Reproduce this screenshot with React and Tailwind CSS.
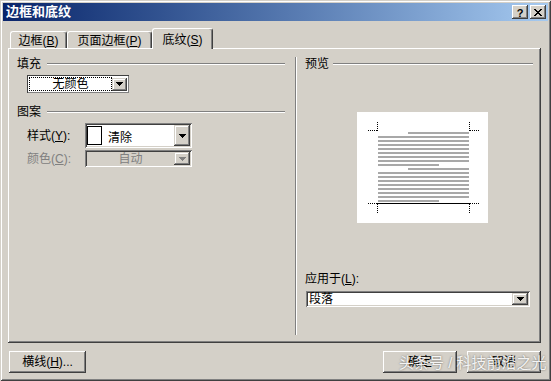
import React from 'react';

function Arrow({ color = '#000' }) {
  return (
    <svg width="7" height="4" viewBox="0 0 7 4" shapeRendering="crispEdges">
      <rect x="0" y="0" width="7" height="1" fill={color} />
      <rect x="1" y="1" width="5" height="1" fill={color} />
      <rect x="2" y="2" width="3" height="1" fill={color} />
      <rect x="3" y="3" width="1" height="1" fill={color} />
    </svg>
  );
}

function DropBtn({ className, disabled }) {
  return (
    <div
      className={
        'flex items-center justify-center bg-[#d4d0c8] shadow-[inset_-1px_-1px_#404040,inset_1px_1px_#d4d0c8,inset_-2px_-2px_#808080,inset_2px_2px_#ffffff] ' +
        className
      }
    >
      <Arrow color={disabled ? '#808080' : '#000'} />
    </div>
  );
}

function GroupHead({ label, gapClass }) {
  return (
    <div className="flex items-center h-[14px]">
      <span className="whitespace-nowrap">{label}</span>
      <div className={'flex-1 h-[2px] border-t border-b border-t-[#808080] border-b-white ' + gapClass} />
    </div>
  );
}

function Preview() {
  const rows = [];
  for (let i = 0; i < 18; i++) {
    const y = 20 + 4 * i;
    const x1 = i === 0 || i === 9 ? 51 : 21;
    const x2 = i === 8 || i === 17 ? 82 : 112;
    rows.push(<rect key={i} x={x1} y={y} width={x2 - x1} height="2" fill="#a8a8a8" />);
  }
  return (
    <svg width="131" height="111" viewBox="0 0 131 111" shapeRendering="crispEdges">
      {rows}
      <g stroke="#000" strokeWidth="1" strokeDasharray="1 1" fill="none">
        <line x1="20.5" y1="10" x2="20.5" y2="19" />
        <line x1="11" y1="18.5" x2="20" y2="18.5" />
        <line x1="112.5" y1="10" x2="112.5" y2="19" />
        <line x1="113" y1="18.5" x2="122" y2="18.5" />
        <line x1="11" y1="91.5" x2="20" y2="91.5" />
        <line x1="20.5" y1="92" x2="20.5" y2="102" />
        <line x1="113" y1="91.5" x2="122" y2="91.5" />
        <line x1="112.5" y1="92" x2="112.5" y2="102" />
      </g>
      <line x1="20" y1="91.5" x2="113" y2="91.5" stroke="#000" strokeWidth="1" />
    </svg>
  );
}

export default function App() {
  return (
    <div className="relative w-[551px] h-[381px] overflow-hidden bg-[#d4d0c8] shadow-[inset_1px_1px_#d4d0c8,inset_-1px_-1px_#404040,inset_2px_2px_#ffffff,inset_-2px_-2px_#808080] text-[12px] leading-[14px] text-black font-['Liberation_Sans','Noto_Sans_CJK_SC',sans-serif] pt-[3px] px-[3px] flex flex-col">
      {/* Title bar */}
      <div className="h-[18px] bg-linear-to-r from-[#0a246a] to-[#a6caf0] flex items-center justify-between pl-[3px] pr-[2px]">
        <span className="text-white font-bold text-[13px] leading-[16px]">边框和底纹</span>
        <div className="flex gap-[2px]">
          <div className="w-[16px] h-[14px] flex items-center justify-center bg-[#d4d0c8] shadow-[inset_-1px_-1px_#404040,inset_1px_1px_#ffffff,inset_-2px_-2px_#808080] font-bold text-[11px] leading-[12px] pt-[1px]">
            ?
          </div>
          <div className="w-[16px] h-[14px] flex items-center justify-center bg-[#d4d0c8] shadow-[inset_-1px_-1px_#404040,inset_1px_1px_#ffffff,inset_-2px_-2px_#808080]">
            <svg width="8" height="7" viewBox="0 0 8 7" shapeRendering="crispEdges">
              <path d="M0 0h2v1h-2zM6 0h2v1h-2zM1 1h2v1h-2zM5 1h2v1h-2zM2 2h4v1h-4zM3 3h2v1h-2zM2 4h4v1h-4zM1 5h2v1h-2zM5 5h2v1h-2zM0 6h2v1h-2zM6 6h2v1h-2z" fill="#000" />
            </svg>
          </div>
        </div>
      </div>

      {/* Tabs */}
      <div className="mt-[7px] h-[20px] flex items-end pl-[7px]">
        <div className="w-[57px] h-[17px] flex items-center justify-center border-t border-l border-r border-t-white border-l-white border-r-[#404040] shadow-[inset_-1px_0_#808080] rounded-t-[3px] pt-[1px]">
          <span>
            边框(<span className="underline">B</span>)
          </span>
        </div>
        <div className="w-[85px] h-[17px] flex items-center justify-center border-t border-l border-r border-t-white border-l-white border-r-[#404040] shadow-[inset_-1px_0_#808080] rounded-t-[3px] pt-[1px]">
          <span>
            页面边框(<span className="underline">P</span>)
          </span>
        </div>
        <div className="relative z-10 -mb-[1px] w-[61px] h-[21px] bg-[#d4d0c8] flex items-center justify-center border-t border-l border-r border-t-white border-l-white border-r-[#404040] shadow-[inset_-1px_0_#808080] rounded-t-[3px] pt-[1px]">
          <span>
            底纹(<span className="underline">S</span>)
          </span>
        </div>
      </div>

      {/* Panel */}
      <div className="ml-[5px] mr-[7px] h-[295px] flex pt-[9px] pb-[8px] shadow-[inset_-1px_-1px_#404040,inset_1px_1px_#ffffff,inset_-2px_-2px_#808080]">
        {/* Left column */}
        <div className="w-[287px] pl-[9px] pr-[10px] flex flex-col">
          <GroupHead label="填充" gapClass="ml-[6px]" />
          <div className="mt-[4px] ml-[10px] w-[102px] h-[18px] bg-white flex shadow-[inset_1px_1px_#404040,inset_-1px_-1px_#808080] p-[2px]">
            <div className="flex-1 flex items-center justify-center border border-dotted border-black">
              无颜色
            </div>
            <div className="flex items-center">
              <DropBtn className="w-[15px] h-[13px]" />
            </div>
          </div>

          <div className="mt-[12px]">
            <GroupHead label="图案" gapClass="ml-[6px]" />
          </div>

          <div className="mt-[4px] ml-[10px] flex items-center h-[25px]">
            <span className="w-[58px]">
              样式(<span className="underline">Y</span>):
            </span>
            <div className="w-[107px] h-[25px] bg-white flex items-stretch p-[2px] shadow-[inset_1px_1px_#808080,inset_-1px_-1px_#ffffff,inset_2px_2px_#404040,inset_-2px_-2px_#d4d0c8]">
              <div className="flex-1 flex items-center">
                <div className="w-[15px] h-[19px] border border-black bg-white ml-[0px]" />
                <span className="ml-[6px] mt-[4px]">清除</span>
              </div>
              <DropBtn className="w-[16px]" />
            </div>
          </div>

          <div className="mt-[2px] ml-[10px] flex items-center h-[17px] text-[#808080]">
            <span className="w-[58px]">
              颜色(<span className="underline">C</span>):
            </span>
            <div className="w-[107px] h-[17px] bg-[#d4d0c8] flex items-stretch p-[2px] shadow-[inset_1px_1px_#808080,inset_-1px_-1px_#ffffff,inset_2px_2px_#404040,inset_-2px_-2px_#d4d0c8]">
              <div className="flex-1 flex items-center justify-center">自动</div>
              <DropBtn className="w-[16px]" disabled />
            </div>
          </div>
        </div>

        {/* Separator */}
        <div className="w-[2px] border-l border-r border-l-[#808080] border-r-white" />

        {/* Right column */}
        <div className="flex-1 pl-[8px] pr-[8px] flex flex-col">
          <GroupHead label="预览" gapClass="ml-[4px]" />
          <div className="mt-[41px] ml-[52px] w-[131px] h-[111px] bg-white">
            <Preview />
          </div>
          <div className="mt-[49px] h-[14px]">
            应用于(<span className="underline">L</span>):
          </div>
          <div className="mt-[5px] ml-[1px] w-[224px] h-[16px] bg-white flex items-stretch p-[2px] shadow-[inset_1px_1px_#808080,inset_-1px_-1px_#ffffff,inset_2px_2px_#404040,inset_-2px_-2px_#d4d0c8]">
            <div className="flex-1 flex items-center pl-[1px]">段落</div>
            <DropBtn className="w-[16px]" />
          </div>
        </div>
      </div>

      {/* Buttons */}
      <div className="mt-[8px] flex pl-[6px] pr-[7px]">
        <div className="w-[77px] h-[22px] flex items-center justify-center bg-[#d4d0c8] shadow-[inset_-1px_-1px_#404040,inset_1px_1px_#ffffff,inset_-2px_-2px_#808080]">
          横线(<span className="underline">H</span>)...
        </div>
        <div className="flex-1" />
        <div className="w-[74px] h-[22px] flex items-center justify-center bg-[#d4d0c8] shadow-[inset_-1px_-1px_#404040,inset_1px_1px_#ffffff,inset_-2px_-2px_#808080]">
          确定
        </div>
        <div className="ml-[10px] w-[74px] h-[22px] flex items-center justify-center bg-[#d4d0c8] shadow-[inset_-1px_-1px_#404040,inset_1px_1px_#ffffff,inset_-2px_-2px_#808080]">
          取消
        </div>
      </div>

      {/* Watermark */}
      <div className="absolute left-[399px] top-[354px] text-[15px] leading-[18px] text-white/90 whitespace-nowrap [text-shadow:0_0_2px_rgba(0,0,0,0.55)]">
        头条号 / 科技前沿之光
      </div>
    </div>
  );
}
